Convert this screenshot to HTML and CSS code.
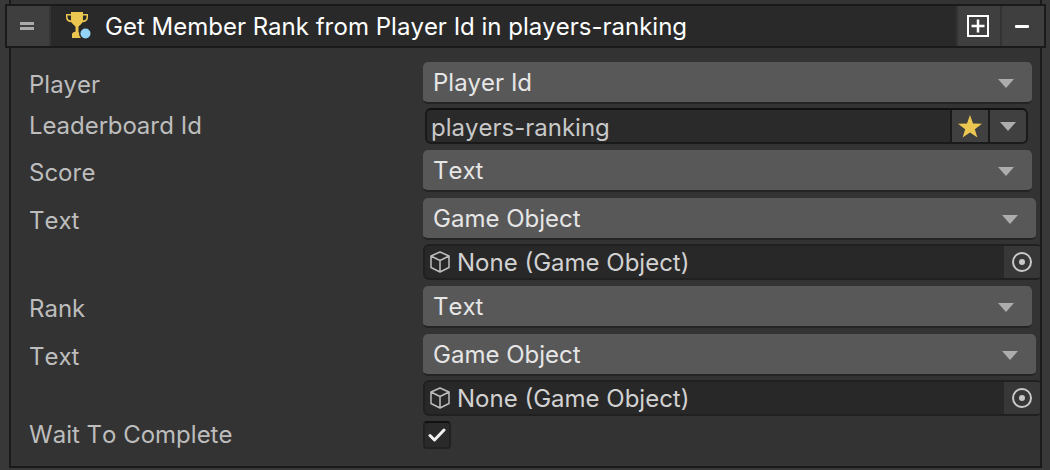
FILE: index.html
```html
<!DOCTYPE html>
<html lang="en">
<head>
<meta charset="utf-8">
<meta name="viewport" content="width=device-width, initial-scale=1">
<title>Inspector</title>
<link rel="stylesheet" href="styles.css">
</head>
<body>
<main class="inspector">
  <div class="previous-body"></div>

  <header class="head">
    <button class="head-btn head-handle" type="button" aria-label="Reorder">
      <svg width="14" height="8" viewBox="0 0 14 8"><path fill="#aaa" d="M0 0h14v3H0zM0 5h14v3H0z"/></svg>
    </button>
    <div class="head-title">
      <svg class="trophy" width="26" height="28" viewBox="0 0 26 28">
        <path fill="#ebc650" d="M5 0h12v2h5v3c0 3.500-2 5-5.500 5.300C15.500 12 14 13.300 12.500 14.500v5.700l4.500 1.800v4H6v-3.500c0-1.500 1-2.400 3.500-2.700v-5.300C8 13.300 6.500 12 5.500 10.300 2 10 0 8.500 0 5V2h5zM1.500 3.500V5c0 2 1.200 3.200 3.500 3.500v-5zM17 3.500v5c2.300-.3 3.500-1.500 3.500-3.500V3.500z"/>
        <circle cx="19.500" cy="21.500" r="6.500" fill="#292929"/>
        <circle cx="19.500" cy="21.500" r="5" fill="#93d3f5"/>
      </svg>
      <h1 class="head-text">Get Member Rank from Player Id in players-ranking</h1>
    </div>
    <button class="head-btn" type="button" aria-label="Duplicate">
      <svg width="22" height="22" viewBox="0 0 22 22" fill="none" stroke="#fff" stroke-width="2"><rect x="1" y="1" width="20" height="20"/><path stroke-width="2.500" d="M4.500 11h13M11 4.500v13"/></svg>
    </button>
    <button class="head-btn" type="button" aria-label="Remove">
      <svg width="14" height="3" viewBox="0 0 14 3"><rect width="14" height="3" rx="1" fill="#fff"/></svg>
    </button>
  </header>

  <form class="body">
    <div class="row row-select">
      <label class="label" for="player">Player</label>
      <div class="select">
        <select id="player" class="select-box"><option>Player Id</option></select>
        <svg class="arrow" width="16" height="9" viewBox="0 0 16 9"><path d="M0 0h16L8 9z"/></svg>
      </div>
    </div>

    <div class="row">
      <label class="label" for="board">Leaderboard Id</label>
      <div class="combo">
        <input id="board" class="combo-input" type="text" value="players-ranking">
        <button class="combo-btn" type="button" aria-label="Favorite">
          <svg width="24" height="23" viewBox="0 0 24 23"><path fill="#ebc650" d="M12 0l3 8.500 9 .2-7.200 5.500L19.400 22.500 12 17.500 4.600 22.500 7.200 14.200 0 8.700l9-.2z"/></svg>
        </button>
        <button class="combo-btn" type="button" aria-label="Choose leaderboard">
          <svg class="combo-arrow" width="16" height="9" viewBox="0 0 16 9"><path d="M0 0h16L8 9z"/></svg>
        </button>
      </div>
    </div>

    <div class="row row-select">
      <label class="label" for="score">Score</label>
      <div class="select">
        <select id="score" class="select-box"><option>Text</option></select>
        <svg class="arrow" width="16" height="9" viewBox="0 0 16 9"><path d="M0 0h16L8 9z"/></svg>
      </div>
    </div>

    <div class="row row-select">
      <label class="label" for="score-text">Text</label>
      <div class="select select-nested">
        <select id="score-text" class="select-box"><option>Game Object</option></select>
        <svg class="arrow" width="16" height="9" viewBox="0 0 16 9"><path d="M0 0h16L8 9z"/></svg>
      </div>
    </div>

    <div class="row">
      <div class="object">
        <svg class="cube" width="20" height="22" viewBox="0 0 20 22"><path d="M10 1l9 4v11.500L10 21l-9-4.500V5zM1 5l9 4.500L19 5M10 9.500V21"/></svg>
        <input class="object-input" type="text" value="None (Game Object)" aria-label="Score game object" readonly>
        <button class="object-btn" type="button" aria-label="Pick score object">
          <svg width="20" height="20" viewBox="0 0 20 20"><circle cx="10" cy="10" r="9" fill="none" stroke="#c8c8c8" stroke-width="2"/><circle cx="10" cy="10" r="3" fill="#c8c8c8"/></svg>
        </button>
      </div>
    </div>

    <div class="row row-select">
      <label class="label" for="rank">Rank</label>
      <div class="select">
        <select id="rank" class="select-box"><option>Text</option></select>
        <svg class="arrow" width="16" height="9" viewBox="0 0 16 9"><path d="M0 0h16L8 9z"/></svg>
      </div>
    </div>

    <div class="row row-select">
      <label class="label" for="rank-text">Text</label>
      <div class="select select-nested">
        <select id="rank-text" class="select-box"><option>Game Object</option></select>
        <svg class="arrow" width="16" height="9" viewBox="0 0 16 9"><path d="M0 0h16L8 9z"/></svg>
      </div>
    </div>

    <div class="row">
      <div class="object">
        <svg class="cube" width="20" height="22" viewBox="0 0 20 22"><path d="M10 1l9 4v11.500L10 21l-9-4.500V5zM1 5l9 4.500L19 5M10 9.500V21"/></svg>
        <input class="object-input" type="text" value="None (Game Object)" aria-label="Rank game object" readonly>
        <button class="object-btn" type="button" aria-label="Pick rank object">
          <svg width="20" height="20" viewBox="0 0 20 20"><circle cx="10" cy="10" r="9" fill="none" stroke="#c8c8c8" stroke-width="2"/><circle cx="10" cy="10" r="3" fill="#c8c8c8"/></svg>
        </button>
      </div>
    </div>

    <div class="row row-check">
      <label class="label" for="wait">Wait To Complete</label>
      <div class="check">
        <input id="wait" class="check-box" type="checkbox" checked>
        <svg class="check-mark" width="18" height="14" viewBox="0 0 18 14"><path d="M2 7.500l4.500 4.500L16 2"/></svg>
      </div>
    </div>
  </form>
</main>
</body>
</html>
```

FILE: styles.css
```css
* {
  box-sizing: border-box;
}

body {
  margin: 0;
  background: #383838;
  color: #bdbdbd;
  font: 24px/30px Inter, "Liberation Sans", sans-serif;
  font-kerning: none;
}

svg {
  display: block;
  flex: none;
}

button,
input,
select {
  margin: 0;
  padding: 0;
  border: 0;
  border-radius: 0;
  background: none;
  color: inherit;
  font: inherit;
  font-kerning: none;
  appearance: none;
}

.inspector {
  padding: 0 4px 0 5px;
}

.previous-body {
  height: 4px;
  margin: 0 4px;
  border: solid #1a1a1a;
  border-width: 0 2px;
  background: #333;
}

/* Header bar */
.head {
  display: flex;
  gap: 2px;
  border: 2px solid #1a1a1a;
  background: #333;
}

.head-btn {
  display: grid;
  place-items: center;
  width: 42px;
  height: 40px;
  padding-right: 2px;
  background: #3f3f3f;
}

.head-title {
  display: flex;
  flex: 1;
  align-items: center;
  gap: 13px;
  min-width: 0;
  padding-left: 15px;
  background: #292929;
}

.head-text {
  margin: 0;
  padding-top: 2px;
  color: #fff;
  font-size: 24px;
  font-weight: 400;
}

/* Property list */
.body {
  display: flex;
  flex-direction: column;
  gap: 4px;
  margin: 0 4px;
  padding: 12px 0 16px 18px;
  border: solid #1a1a1a;
  border-width: 0 2px 2px;
  background: #333;
}

.row {
  display: grid;
  grid-template-columns: 394px 1fr;
  align-items: center;
}

.row-select {
  padding-top: 2px;
}

.row-select .label {
  padding-top: 4px;
}

.row-check {
  min-height: 30px;
}

/* Drop-downs */
.select {
  display: grid;
  align-items: center;
  margin-right: 8px;
}

.select-nested {
  margin-right: 4px;
}

.select-box {
  grid-area: 1 / 1;
  height: 42px;
  padding: 2px 40px 0 10px;
  border-bottom: 2px solid #242424;
  border-radius: 5px;
  background: #585858;
  color: #e6e6e6;
}

.arrow {
  grid-area: 1 / 1;
  justify-self: end;
  margin-right: 18px;
  fill: #adadad;
  pointer-events: none;
}

.combo-arrow {
  fill: #adadad;
}

/* Text box with attached buttons */
.combo {
  display: flex;
  gap: 2px;
  height: 36px;
  margin: 0 12px 0 2px;
  overflow: hidden;
  border: 2px solid #1a1a1a;
  border-top-color: #111;
  border-radius: 6px;
  background: #1a1a1a;
}

.combo-input {
  flex: 1;
  min-width: 0;
  padding: 4px 4px 0;
  background: #2a2a2a;
  color: #c8c8c8;
}

.combo-btn {
  display: grid;
  place-items: center;
  width: 36px;
  background: #404040;
}

/* Object reference field */
.object {
  display: flex;
  grid-column: 2;
  align-items: center;
  height: 36px;
  overflow: hidden;
  border: solid #202020;
  border-width: 2px 0 2px 2px;
  border-radius: 6px 3px 3px 6px;
  background: #282828;
}

.cube {
  margin: 0 7px 0 5px;
  fill: none;
  stroke: #bebebe;
  stroke-width: 1.5;
  stroke-linejoin: round;
}

.object-input {
  flex: 1;
  min-width: 0;
  padding-top: 2px;
  color: #d2d2d2;
}

.object-btn {
  display: grid;
  place-items: center;
  align-self: stretch;
  width: 36px;
  background: #373737;
}

/* Tick box */
.check {
  display: grid;
  place-items: center;
  justify-self: start;
}

.check-box {
  grid-area: 1 / 1;
  width: 28px;
  height: 28px;
  border: 2px solid #212121;
  border-top-color: #111;
  border-radius: 4px;
  background: #2a2a2a;
}

.check-mark {
  grid-area: 1 / 1;
  visibility: hidden;
  fill: none;
  stroke: #f0f0f0;
  stroke-width: 3px;
  stroke-linecap: round;
  stroke-linejoin: round;
  pointer-events: none;
}

.check-box:checked + .check-mark {
  visibility: visible;
}
```
